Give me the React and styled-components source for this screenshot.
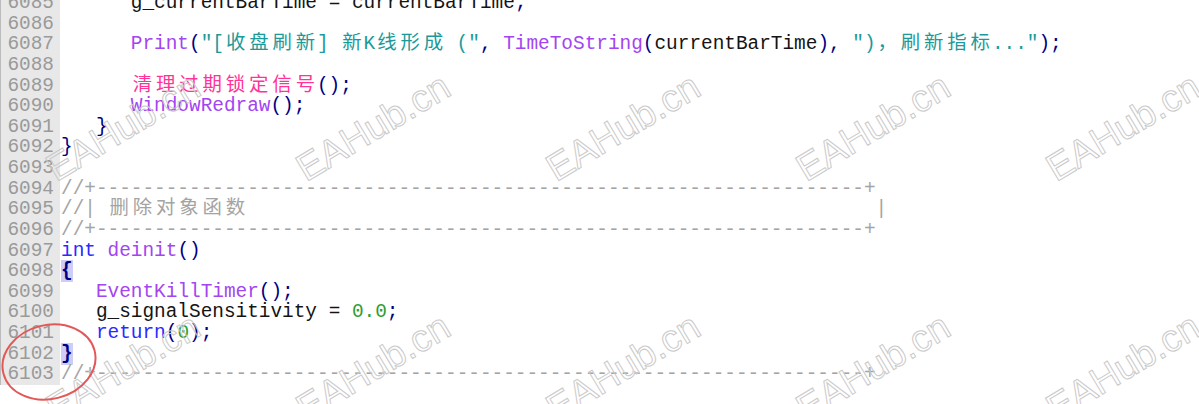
import React from 'react';
import styled, { createGlobalStyle, css } from 'styled-components';

const GlobalStyle = createGlobalStyle`
  html, body {
    margin: 0;
    padding: 0;
    background: #fff;
  }
  body {
    width: 1199px;
    height: 404px;
    overflow: hidden;
  }
`;

const colors = {
  id: '#141414',
  fn: '#a345f0',
  kw: '#2a2aff',
  str: '#1c9a9a',
  own: '#ff3399',
  pun: '#000080',
  num: '#2e9e2e',
  cm: '#a4a4a4',
};

const Page = styled.div`
  position: relative;
  width: 1199px;
  height: 404px;
  overflow: hidden;
  background: #fff;
`;

const Editor = styled.div`
  display: flex;
  flex-direction: column;
  margin-top: -7px;
  font-family: "Liberation Mono", "Noto Sans CJK SC", monospace;
  font-size: 19.4px;
  line-height: 20.625px;
`;

const Row = styled.div`
  display: flex;
  height: 20.625px;
`;

const LineNo = styled.div`
  flex: 0 0 60px;
  box-sizing: border-box;
  padding-right: 6px;
  text-align: right;
  background: #e8e8e8;
  border-left: 1px solid #bcbcbc;
  color: #9a9a9a;
`;

const Code = styled.div`
  flex: 1;
  padding-left: 1px;
  white-space: pre;
`;

const Tok = styled.span`
  color: ${(p) => colors[p.$k]};
  ${(p) =>
    p.$match &&
    css`
      background: #cdcdf7;
      font-weight: bold;
    `}
`;

// CJK glyphs take two columns, like the editor draws them
const Wide = styled.span`
  display: inline-block;
  width: 2ch;
  text-align: center;
`;

const MarkLayer = styled.div`
  position: absolute;
  left: -2px;
  top: 7px;
  display: grid;
  grid-template-columns: repeat(5, 250px);
  grid-auto-rows: 240px;
  pointer-events: none;
`;

const Mark = styled.div`
  display: flex;
  align-items: center;
  justify-content: center;
  font-family: "Liberation Sans", Arial, sans-serif;
  font-size: 38px;
  color: transparent;
  -webkit-text-stroke: 1px #cacaca;
  transform: rotate(-31deg);
  white-space: nowrap;
`;

const Circle = styled.svg`
  position: absolute;
  left: 0;
  top: 318px;
  width: 104px;
  height: 86px;
  overflow: visible;
`;

const CJK = /[\u3000-\u9fff\uff00-\uffef]/;

const spread = (text) => {
  const out = [];
  let buf = '';
  [...text].forEach((ch, i) => {
    if (CJK.test(ch)) {
      if (buf) out.push(buf);
      buf = '';
      out.push(<Wide key={i}>{ch}</Wide>);
    } else {
      buf += ch;
    }
  });
  if (buf) out.push(buf);
  return out;
};

const rule = '//+' + '-'.repeat(66) + '+';

const lines = [
  [['id', '      g_currentBarTime = currentBarTime'], ['pun', ';']],
  [],
  [
    ['id', '      '],
    ['fn', 'Print'],
    ['pun', '('],
    ['str', '"[收盘刷新] 新K线形成 ("'],
    ['pun', ', '],
    ['fn', 'TimeToString'],
    ['pun', '('],
    ['id', 'currentBarTime'],
    ['pun', '), '],
    ['str', '")，刷新指标..."'],
    ['pun', ');'],
  ],
  [],
  [['id', '      '], ['own', '清理过期锁定信号'], ['pun', '();']],
  [['id', '      '], ['fn', 'WindowRedraw'], ['pun', '();']],
  [['id', '   '], ['pun', '}']],
  [['pun', '}']],
  [],
  [['cm', rule]],
  [['cm', '//| 删除对象函数' + ' '.repeat(54) + '|']],
  [['cm', rule]],
  [['kw', 'int'], ['id', ' '], ['fn', 'deinit'], ['pun', '()']],
  [['pun', '{', true]],
  [['id', '   '], ['fn', 'EventKillTimer'], ['pun', '();']],
  [['id', '   g_signalSensitivity = '], ['num', '0.0'], ['pun', ';']],
  [['id', '   '], ['kw', 'return'], ['pun', '('], ['num', '0'], ['pun', ');']],
  [['pun', '}', true]],
  [['cm', rule]],
];

const App = () => (
  <Page>
    <GlobalStyle />
    <Editor>
      {lines.map((toks, i) => (
        <Row key={i}>
          <LineNo>{6085 + i}</LineNo>
          <Code>
            {toks.map(([k, text, match], j) => (
              <Tok key={j} $k={k} $match={match}>
                {spread(text)}
              </Tok>
            ))}
          </Code>
        </Row>
      ))}
    </Editor>
    <MarkLayer>
      {Array.from({ length: 10 }).map((_, i) => (
        <Mark key={i}>EAHub.cn</Mark>
      ))}
    </MarkLayer>
    <Circle viewBox="0 0 104 86">
      <ellipse
        cx="49"
        cy="44"
        rx="47"
        ry="37"
        transform="rotate(-14 49 44)"
        fill="none"
        stroke="#e25858"
        strokeWidth="2"
      />
    </Circle>
  </Page>
);

export default App;
